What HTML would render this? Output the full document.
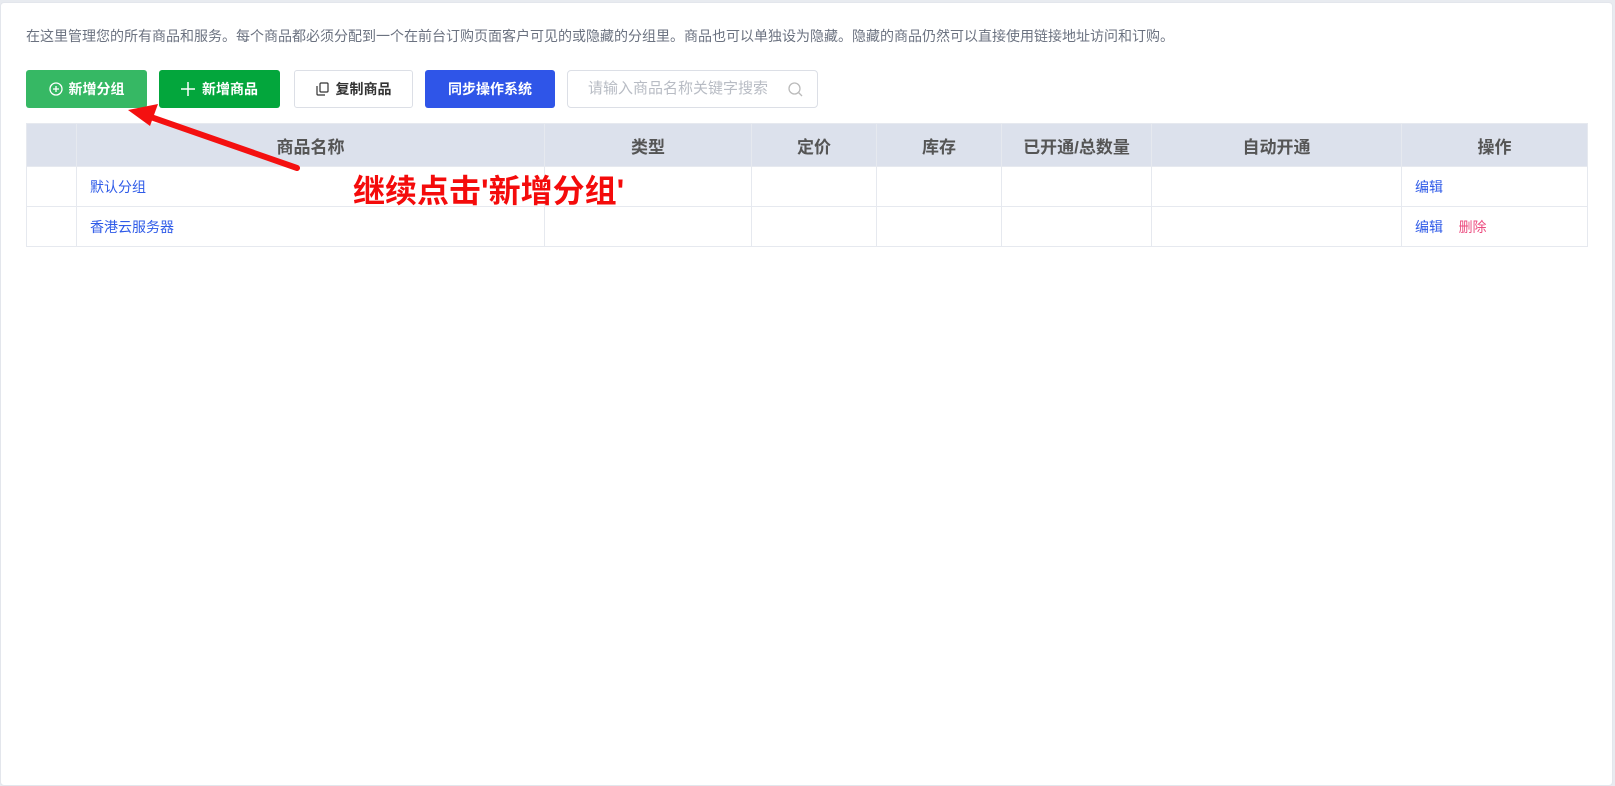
<!DOCTYPE html>
<html><head><meta charset="utf-8"><style>
*{box-sizing:border-box;margin:0;padding:0}
body{width:1615px;height:786px;background:#e8ebf0;font-family:"Liberation Sans","Noto Sans CJK SC",sans-serif;position:relative;overflow:hidden}
.card{position:absolute;left:0;top:2px;width:1613px;height:784px;background:#fff;border-radius:4px;border:1px solid #e3e6ec}
.desc{position:absolute;left:26px;top:26px;font-size:14px;color:#6b7280}
.btn{position:absolute;top:70px;height:38px;border-radius:3px;font-size:14px;font-weight:bold;display:flex;align-items:center;justify-content:center;color:#fff}
.search{position:absolute;left:567px;top:70px;width:251px;height:38px;border:1px solid #dcdfe6;border-radius:4px;font-size:15px;color:#b8bcc4;padding-left:20px;line-height:36px}
table{position:absolute;left:26px;top:123px;width:1562px;border-collapse:collapse;font-size:14px}
td,th{border:1px solid #e6e9ef}
th{background:#dce1ec;height:43px;color:#555;font-size:17px}
td{height:40px;padding-left:13px}
a{color:#2f5be8;text-decoration:none}
.red{position:absolute;left:353px;top:166px;font-size:32px;font-weight:bold;color:#f40b0b}
</style></head><body>
<div class="card"></div>
<div class="desc">在这里管理您的所有商品和服务。每个商品都必须分配到一个在前台订购页面客户可见的或隐藏的分组里。商品也可以单独设为隐藏。隐藏的商品仍然可以直接使用链接地址访问和订购。</div>
<div class="btn" style="left:26px;width:121px;background:#36b864"><svg width="14" height="14" viewBox="0 0 14 14" style="margin-right:6px"><circle cx="7" cy="7" r="6" fill="none" stroke="#fff" stroke-width="1.3"/><path d="M7 4v6M4 7h6" stroke="#fff" stroke-width="1.3"/></svg>新增分组</div>
<div class="btn" style="left:159px;width:121px;background:#03a63c"><svg width="14" height="14" viewBox="0 0 14 14" style="margin-right:7px"><path d="M7 0v14M0 7h14" stroke="#fff" stroke-width="1.5"/></svg>新增商品</div>
<div class="btn" style="left:294px;width:119px;background:#fff;border:1px solid #dcdfe6;color:#333"><svg width="13" height="14" viewBox="0 0 13 14" style="margin-right:7px"><rect x="4" y="1" width="8" height="9" rx="1" fill="none" stroke="#333" stroke-width="1.2"/><path d="M1 4v8a1 1 0 0 0 1 1h7" fill="none" stroke="#333" stroke-width="1.2"/></svg>复制商品</div>
<div class="btn" style="left:425px;width:130px;background:#2f55e8">同步操作系统</div>
<div class="search">请输入商品名称关键字搜索<svg style="position:absolute;right:14px;top:11px" width="15" height="15" viewBox="0 0 15 15"><circle cx="6.5" cy="6.5" r="5.5" fill="none" stroke="#bbb" stroke-width="1.3"/><path d="M10.5 10.5L14 14" stroke="#bbb" stroke-width="1.3"/></svg></div>
<table>
<tr><th style="width:50px"></th><th style="width:468px">商品名称</th><th style="width:207px">类型</th><th style="width:125px">定价</th><th style="width:125px">库存</th><th style="width:150px">已开通/总数量</th><th style="width:250px">自动开通</th><th>操作</th></tr>
<tr><td></td><td><a>默认分组</a></td><td></td><td></td><td></td><td></td><td></td><td><a>编辑</a></td></tr>
<tr><td></td><td><a>香港云服务器</a></td><td></td><td></td><td></td><td></td><td></td><td><a>编辑</a>&nbsp;&nbsp;&nbsp;&nbsp;<span style="color:#ec4b7f">删除</span></td></tr>
</table>
<svg style="position:absolute;left:0;top:0" width="400" height="200"><line x1="297" y1="168" x2="145" y2="115" stroke="#f41010" stroke-width="6" stroke-linecap="round"/><polygon points="128,110 158,104 150,126" fill="#f41010"/></svg>
<div class="red">继续点击'新增分组'</div>
</body></html>
